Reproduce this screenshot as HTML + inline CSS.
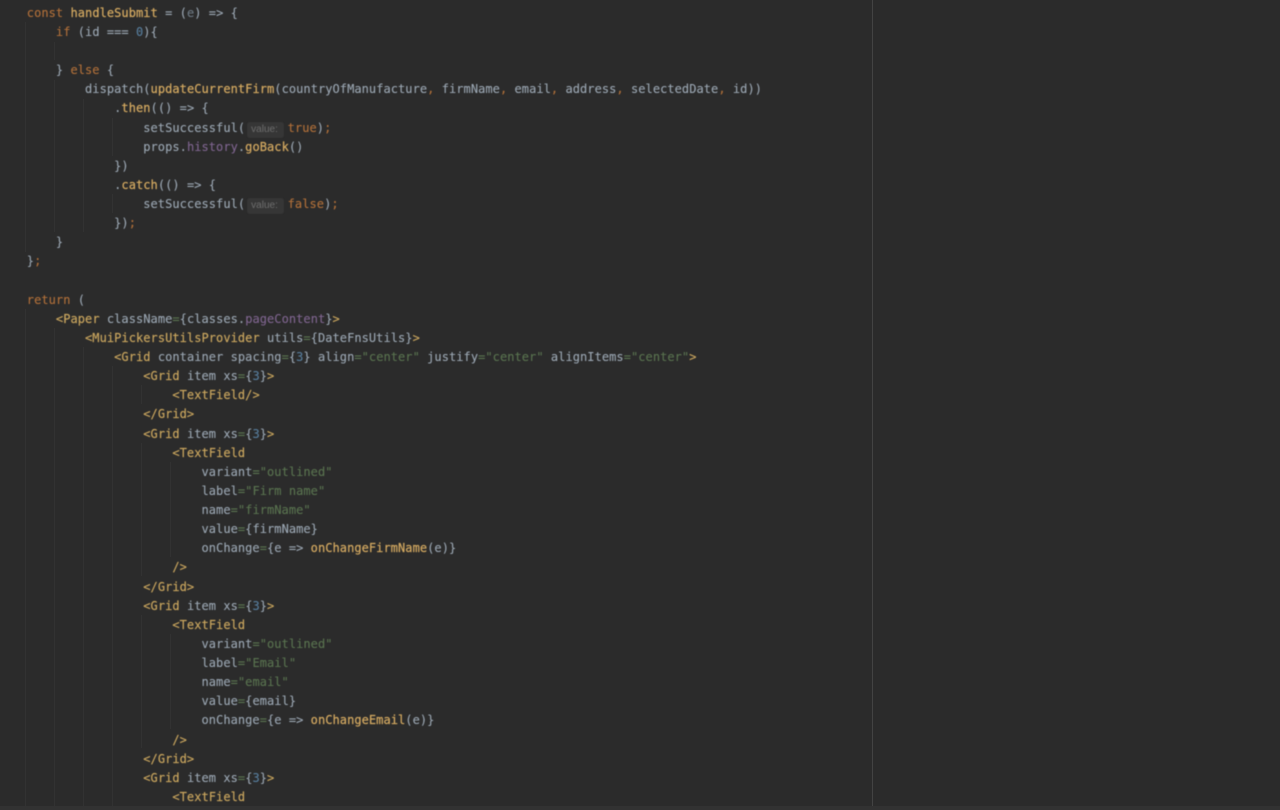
<!DOCTYPE html>
<html><head><meta charset="utf-8"><style>
html,body{margin:0;padding:0;width:1280px;height:810px;overflow:hidden;background:#2b2b2b}
#g i{position:absolute;width:1px;background:#323232;display:block}
pre{position:absolute;left:26.8px;top:3.8px;margin:0;font:12px/19.125px "DejaVu Sans Mono","Liberation Mono",monospace;letter-spacing:.054px;color:#9ca8b4;filter:blur(.45px);white-space:pre;-webkit-text-stroke:.1px currentColor}
.k{color:#b3713a}.f{color:#d6ab62;-webkit-text-stroke:.2px currentColor}.s{color:#5a7450}.n{color:#587f9f}.p{color:#806691}.t{color:#cba75f;-webkit-text-stroke:.15px currentColor}.o{color:#b3713a}.e{color:#6f7b86}
.h{display:inline-block;box-sizing:border-box;width:42.5px;padding-left:6px;position:relative;font:10px/14px "Liberation Sans",sans-serif;color:#6e6e6e;letter-spacing:0;-webkit-text-stroke:0}
.h:before{content:"";position:absolute;left:2px;right:4px;top:-1px;height:16px;background:#363636;border-radius:3px;z-index:-1}
</style></head><body>
<div id="g">
<i style="left:25px;top:22px;height:230px"></i>
<i style="left:54px;top:42px;height:18px"></i>
<i style="left:54px;top:80px;height:152px"></i>
<i style="left:83px;top:99px;height:133px"></i>
<i style="left:112px;top:118px;height:38px"></i>
<i style="left:112px;top:194px;height:19px"></i>
<i style="left:25px;top:309px;height:497px"></i>
<i style="left:54px;top:328px;height:478px"></i>
<i style="left:83px;top:347px;height:459px"></i>
<i style="left:112px;top:366px;height:440px"></i>
<i style="left:141px;top:385px;height:19px"></i>
<i style="left:141px;top:443px;height:133px"></i>
<i style="left:170px;top:462px;height:95px"></i>
<i style="left:141px;top:615px;height:133px"></i>
<i style="left:170px;top:634px;height:95px"></i>
</div>
<div style="position:absolute;left:872px;top:0;width:1px;height:806px;background:#434343"></div>
<div style="position:absolute;left:0;top:806px;width:1280px;height:4px;background:#323232"></div>
<pre><span class="k">const</span> <span class="f">handleSubmit</span> = (<span class="e">e</span>) =&gt; {
    <span class="k">if</span> (id === <span class="n">0</span>){

    } <span class="k">else</span> {
        dispatch(<span class="f">updateCurrentFirm</span>(countryOfManufacture<span class="o">,</span> firmName<span class="o">,</span> email<span class="o">,</span> address<span class="o">,</span> selectedDate<span class="o">,</span> id))
            .<span class="f">then</span>(() =&gt; {
                setSuccessful(<span class="h">value:</span><span class="k">true</span>)<span class="o">;</span>
                props.<span class="p">history</span>.<span class="f">goBack</span>()
            })
            .<span class="f">catch</span>(() =&gt; {
                setSuccessful(<span class="h">value:</span><span class="k">false</span>)<span class="o">;</span>
            })<span class="o">;</span>
    }
}<span class="o">;</span>

<span class="k">return</span> (
    <span class="t">&lt;Paper</span> className<span class="s">=</span>{classes.<span class="p">pageContent</span>}<span class="t">&gt;</span>
        <span class="t">&lt;MuiPickersUtilsProvider</span> utils<span class="s">=</span>{DateFnsUtils}<span class="t">&gt;</span>
            <span class="t">&lt;Grid</span> container spacing<span class="s">=</span>{<span class="n">3</span>} align<span class="s">="center"</span> justify<span class="s">="center"</span> alignItems<span class="s">="center"</span><span class="t">&gt;</span>
                <span class="t">&lt;Grid</span> item xs<span class="s">=</span>{<span class="n">3</span>}<span class="t">&gt;</span>
                    <span class="t">&lt;TextField/&gt;</span>
                <span class="t">&lt;/Grid&gt;</span>
                <span class="t">&lt;Grid</span> item xs<span class="s">=</span>{<span class="n">3</span>}<span class="t">&gt;</span>
                    <span class="t">&lt;TextField</span>
                        variant<span class="s">="outlined"</span>
                        label<span class="s">="Firm name"</span>
                        name<span class="s">="firmName"</span>
                        value<span class="s">=</span>{firmName}
                        onChange<span class="s">=</span>{e =&gt; <span class="f">onChangeFirmName</span>(e)}
                    <span class="t">/&gt;</span>
                <span class="t">&lt;/Grid&gt;</span>
                <span class="t">&lt;Grid</span> item xs<span class="s">=</span>{<span class="n">3</span>}<span class="t">&gt;</span>
                    <span class="t">&lt;TextField</span>
                        variant<span class="s">="outlined"</span>
                        label<span class="s">="Email"</span>
                        name<span class="s">="email"</span>
                        value<span class="s">=</span>{email}
                        onChange<span class="s">=</span>{e =&gt; <span class="f">onChangeEmail</span>(e)}
                    <span class="t">/&gt;</span>
                <span class="t">&lt;/Grid&gt;</span>
                <span class="t">&lt;Grid</span> item xs<span class="s">=</span>{<span class="n">3</span>}<span class="t">&gt;</span>
                    <span class="t">&lt;TextField</span></pre>
</body></html>
